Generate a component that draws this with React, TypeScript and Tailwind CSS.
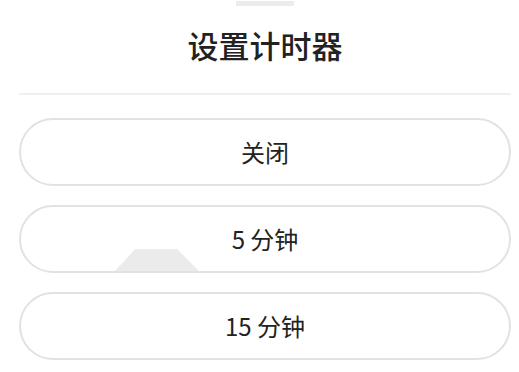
import React from "react";

const options = ["关闭", "5 分钟", "15 分钟"];

export default function App() {
  return (
    <div
      className="relative w-[519px] h-[372px] overflow-hidden bg-white pl-[19px] pr-[8px] text-[#222222]"
      style={{ fontFamily: '"Noto Sans CJK SC", "Noto Sans", sans-serif' }}
    >
      <div className="mx-auto mt-px h-[5px] w-[58px] bg-[#ececec]" />
      <h1 className="mt-[19px] h-[40px] text-center text-[31px] leading-[40px] font-medium">
        设置计时器
      </h1>
      <div className="mt-[28px] h-[2px] bg-[#efefef]" />
      <div className="mt-[23px] flex flex-col gap-[19px]">
        {options.map((o, i) => (
          <div
            key={o}
            className="relative flex h-[68px] items-center justify-center overflow-hidden rounded-full border-2 border-[#e2e2e2] text-[24px]"
          >
            {i === 1 && (
              <div
                className="absolute bottom-0 left-[94px] h-[22px] w-[84px] bg-[#ebebeb]"
                style={{ clipPath: "polygon(24% 0, 74% 0, 100% 100%, 0 100%)" }}
              />
            )}
            <span className="relative">{o}</span>
          </div>
        ))}
      </div>
    </div>
  );
}
